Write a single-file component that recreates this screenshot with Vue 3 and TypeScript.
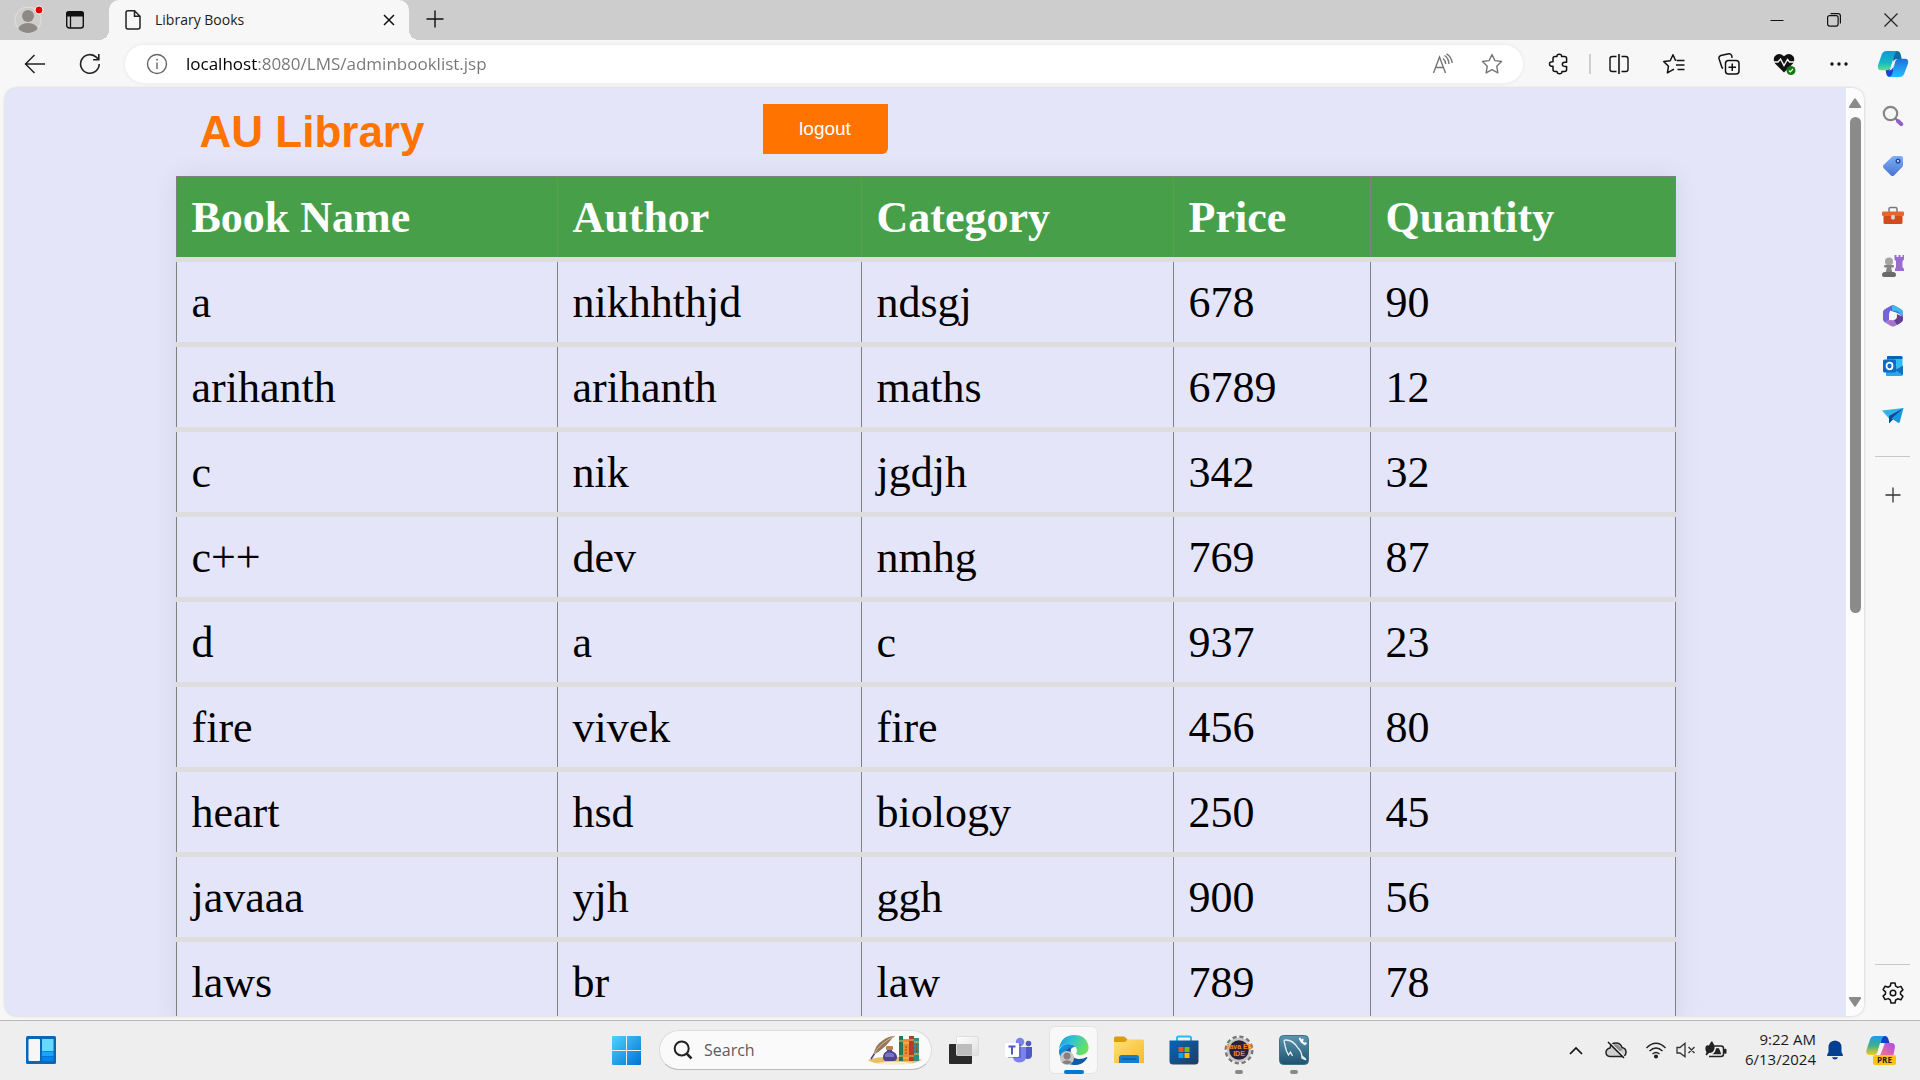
<script setup lang="ts">
import { ref } from 'vue'

interface Book {
  name: string
  author: string
  category: string
  price: number
  quantity: number
}

const books: Book[] = [
  { name: 'a', author: 'nikhhthjd', category: 'ndsgj', price: 678, quantity: 90 },
  { name: 'arihanth', author: 'arihanth', category: 'maths', price: 6789, quantity: 12 },
  { name: 'c', author: 'nik', category: 'jgdjh', price: 342, quantity: 32 },
  { name: 'c++', author: 'dev', category: 'nmhg', price: 769, quantity: 87 },
  { name: 'd', author: 'a', category: 'c', price: 937, quantity: 23 },
  { name: 'fire', author: 'vivek', category: 'fire', price: 456, quantity: 80 },
  { name: 'heart', author: 'hsd', category: 'biology', price: 250, quantity: 45 },
  { name: 'javaaa', author: 'yjh', category: 'ggh', price: 900, quantity: 56 },
  { name: 'laws', author: 'br', category: 'law', price: 789, quantity: 78 },
]

const address = ref('localhost:8080/LMS/adminbooklist.jsp')
const query = ref('')
</script>

<template>
  <div class="screen">
    <header class="tabstrip">
      <button class="avatar" aria-label="Profile">
        <svg width="32" height="32" viewBox="0 0 32 32">
          <defs><clipPath id="head"><circle cx="16" cy="17" r="13" /></clipPath></defs>
          <circle cx="16" cy="17" r="13" fill="#cfcdca" stroke="#e2e0dc" />
          <g clip-path="url(#head)" fill="#8d8985">
            <circle cx="16" cy="13" r="6" />
            <ellipse cx="16" cy="27" rx="10" ry="7" />
          </g>
          <circle cx="27" cy="7" r="4" fill="#e60000" stroke="#f4f4f4" />
        </svg>
      </button>
      <button class="workspaces" aria-label="Tab actions">
        <svg width="20" height="20" viewBox="0 0 20 20">
          <rect x="1.7" y="2" width="16.6" height="16" rx="2.5" fill="none" stroke="#111" stroke-width="1.4" />
          <path d="M1 6.5V4q0-3 3-3h12q3 0 3 3v2.500z" fill="#111" />
          <path d="M5.500 6v12" stroke="#111" stroke-width="1.300" />
        </svg>
      </button>
      <div class="tab">
        <svg class="page-icon" width="18" height="22" viewBox="0 0 18 22" fill="none" stroke="#222" stroke-width="1.500">
          <path d="M4 1.700h6.500L16 7.200V18q0 2-2 2H4q-2 0-2-2V3.700q0-2 2-2z M10.500 2v5.300h5.300" />
        </svg>
        <span class="tab-title">Library Books</span>
        <button class="tab-close" aria-label="Close tab">
          <svg width="12" height="12" viewBox="0 0 12 12" stroke="#111" stroke-width="1.500"><path d="M1 1l10 10M11 1L1 11" /></svg>
        </button>
      </div>
      <button class="new-tab" aria-label="New tab">
        <svg width="18" height="18" viewBox="0 0 18 18" stroke="#111" stroke-width="1.400"><path d="M9 .5v17M.5 9h17" /></svg>
      </button>
      <div class="window-buttons">
        <button aria-label="Minimize"><svg width="14" height="14" viewBox="0 0 14 14"><path d="M.5 7.500h13" stroke="#111" /></svg></button>
        <button aria-label="Restore">
          <svg width="14" height="14" viewBox="0 0 14 14" fill="none" stroke="#111" stroke-width="1.200">
            <rect x=".6" y="2.600" width="10.500" height="10.500" rx="2" /><path d="M3.500.6h7.500q2.400 0 2.400 2.400v7.500" />
          </svg>
        </button>
        <button aria-label="Close"><svg width="14" height="14" viewBox="0 0 14 14" stroke="#222" stroke-width="1.200"><path d="M.5.5l13 13M13.500.5l-13 13" /></svg></button>
      </div>
    </header>

    <nav class="toolbar">
      <button class="nav-button" aria-label="Back">
        <svg width="22" height="20" viewBox="0 0 22 20" fill="none" stroke="#222" stroke-width="1.500"><path d="M21 10H1.500M10.500 1L1.500 10l9 9" /></svg>
      </button>
      <button class="nav-button" aria-label="Refresh">
        <svg width="22" height="22" viewBox="0 0 22 22" fill="none" stroke="#222" stroke-width="1.600"><path d="M20.200 11A9.300 9.300 0 1 1 17.500 4.400L19.600 6.500M19.800 1v5.700h-5.700" /></svg>
      </button>
      <div class="address">
        <button class="site-info" aria-label="Site information">
          <svg width="22" height="22" viewBox="0 0 22 22" fill="none" stroke="#666" stroke-width="1.400"><circle cx="11" cy="11" r="9.500" /><path d="M11 9.500V16" /><circle cx="11" cy="6.700" r=".6" fill="#666" stroke-width=".8" /></svg>
        </button>
        <input v-model="address" class="url" type="text" aria-label="Address" spellcheck="false" />
        <button class="address-button" aria-label="Read aloud">
          <svg width="22" height="22" viewBox="0 0 22 22" fill="none" stroke="#767676" stroke-width="1.400"><path d="M1.500 20L7.500 4l6 16M4 14.500h7.500M11 5.500q2.500 2 2.700 5.500M12.500 2.500q4 2.500 4.500 8.500M14.500.8q5 3 5.700 9.200" /></svg>
        </button>
        <button class="address-button" aria-label="Add to favorites">
          <svg width="22" height="22" viewBox="0 0 22 22" fill="none" stroke="#767676" stroke-width="1.400" stroke-linejoin="round"><path d="M11 1.500l2.900 6.100 6.700.9-4.900 4.700 1.200 6.700-5.900-3.200-5.900 3.200 1.200-6.700L1.400 8.500l6.700-.9z" /></svg>
        </button>
      </div>
      <button class="tool extensions" aria-label="Extensions">
        <svg width="22" height="22" viewBox="0 0 22 22" fill="none" stroke="#111" stroke-width="1.500" stroke-linejoin="round"><path d="M5 5.500q0-2 2-2h2q-.2-2.300 2.300-2.300t2.300 2.300h3q2 0 2 2v3.700q-4.300-.4-4.300 2.100t4.300 2.100v3.100q0 2-2 2h-2.700q.2 2.300-2.300 2.300T9 18.500H7q-2 0-2-2v-3.200q-3.500.2-3.500-2.300T5 8.700z" /></svg>
      </button>
      <span class="tool-divider"></span>
      <button class="tool" aria-label="Split screen">
        <svg width="20" height="22" viewBox="0 0 20 22" fill="none" stroke="#111" stroke-width="1.400"><path d="M10 1v20" stroke-width="1.600" /><path d="M7.500 3.500H3.200Q1 3.500 1 5.700v10.600q0 2.200 2.200 2.200h4.300M12.500 3.500h4.300Q19 3.500 19 5.700v10.600q0 2.200-2.200 2.200h-4.300" /></svg>
      </button>
      <button class="tool" aria-label="Favorites">
        <svg width="22" height="22" viewBox="0 0 22 22" fill="none" stroke="#111" stroke-width="1.500" stroke-linejoin="round"><path d="M13.500 7.200l-1.100 0L10 1.700 7.200 7.700l-6.400.9 4.700 4.600-1.100 6.600L10 16.700l1-.4M14 7.500h7.500M13 12h8.500M14.500 16.500h7" /></svg>
      </button>
      <button class="tool" aria-label="Collections">
        <svg width="22" height="22" viewBox="0 0 22 22" fill="none" stroke="#111" stroke-width="1.500"><rect x="7.500" y="7.500" width="13.500" height="13.500" rx="3" /><path d="M14.250 10.500v7.500M10.500 14.250h7.500M5 15.500q-1-.5-1.400-2L1 5.500Q.5 3.300 2.800 2.500l8-1.700q2.300-.3 2.900 2l.4 2" /></svg>
      </button>
      <button class="tool" aria-label="Browser essentials">
        <svg width="24" height="24" viewBox="0 0 24 24">
          <path d="M12 20.500L3 11.500Q.5 7 3 4q4-4 9 .3 5-4.300 9-.3 2.500 3 0 7.500z" fill="#111" />
          <path d="M1 10h5l2.500-3 3.500 6.500 3.500-6 2 2.500H23" fill="none" stroke="#f7f7f7" stroke-width="1.400" />
          <circle cx="19" cy="18.500" r="4.500" fill="#107c10" /><path d="M17 18.700l1.300 1.300 2.700-3" fill="none" stroke="#fff" stroke-width="1.200" />
        </svg>
      </button>
      <button class="tool" aria-label="Settings and more">
        <svg width="20" height="6" viewBox="0 0 20 6" fill="#111"><circle cx="3" cy="3" r="1.700" /><circle cx="10" cy="3" r="1.700" /><circle cx="17" cy="3" r="1.700" /></svg>
      </button>
      <button class="copilot" aria-label="Copilot">
        <svg width="32" height="28" viewBox="0 0 32 28">
          <defs>
            <linearGradient id="cpA" x1="0" y1="0" x2="0" y2="1"><stop offset="0" stop-color="#1098dc" /><stop offset=".6" stop-color="#15b7c4" /><stop offset="1" stop-color="#63e08c" /></linearGradient>
            <linearGradient id="cpB" x1="0" y1="0" x2="0" y2="1"><stop offset="0" stop-color="#1f6fe0" /><stop offset="1" stop-color="#22bdfb" /></linearGradient>
          </defs>
          <path d="M15 1h5q3 0 3.800 4l.9 4h-4q-3 0-4 4z" fill="#0b6e9c" />
          <path d="M18 27h-5q-3 0-3.800-3.500L8.500 19h3.500q3 0 4-4z" fill="#1546d6" />
          <path d="M9.500 1H21q-2.500.5-3.500 4L14 16q-1 4.300-4.500 4.300H4q-4 0-3-5L4.500 5q1.300-4 5-4z" fill="url(#cpA)" />
          <path d="M22.500 27H12q2.500-.5 3.500-4L18 12q1-3.300 4.500-3.300H28q4 0 3 5L27.500 23q-1.300 4-5 4z" fill="url(#cpB)" />
          <path d="M18.500 9.500q-2 .7-2.800 3.500l-1.700 5q-.7 2-2.500 2.300h1q2.500 0 3.500-3l1.500-5q.6-2 2-2.800z" fill="#f4fbff" />
        </svg>
      </button>
    </nav>

    <div class="workspace">
      <div class="viewport">
        <main class="page">
          <div class="content">
            <div class="banner">
              <h1>AU Library</h1>
              <button class="logout">logout</button>
            </div>
            <table class="books">
              <thead>
                <tr>
                  <th class="col-name" scope="col">Book Name</th>
                  <th class="col-author" scope="col">Author</th>
                  <th class="col-category" scope="col">Category</th>
                  <th class="col-price" scope="col">Price</th>
                  <th scope="col">Quantity</th>
                </tr>
              </thead>
              <tbody>
                <tr v-for="book in books" :key="book.name">
                  <td>{{ book.name }}</td>
                  <td>{{ book.author }}</td>
                  <td>{{ book.category }}</td>
                  <td>{{ book.price }}</td>
                  <td>{{ book.quantity }}</td>
                </tr>
              </tbody>
            </table>
          </div>
        </main>
        <div class="scrollbar">
          <svg width="14" height="11" viewBox="0 0 14 11" fill="#8b8b8b"><path d="M6 1q1-1.500 2 0l5 7.500q.6 1.500-1 1.500H2Q.4 10 1 8.500z" /></svg>
          <div class="track"><div class="thumb"></div></div>
          <svg width="14" height="11" viewBox="0 0 14 11" fill="#8b8b8b"><path d="M6 10q1 1.500 2 0l5-7.500Q13.600 1 12 1H2Q.4 1 1 2.500z" /></svg>
        </div>
      </div>

      <aside class="sidebar">
        <button aria-label="Search">
          <svg width="22" height="22" viewBox="0 0 22 22" fill="none"><circle cx="8.500" cy="8.500" r="6.700" stroke="#858585" stroke-width="2.200" /><path d="M13.500 13.500l2 2" stroke="#777" stroke-width="2" /><path d="M16 16l3.200 3.200" stroke="#9160c8" stroke-width="4" stroke-linecap="round" /></svg>
        </button>
        <button aria-label="Shopping">
          <svg width="22" height="22" viewBox="0 0 22 22"><defs><linearGradient id="tagG" x1="0" y1="0" x2="0" y2="1"><stop stop-color="#7eb1f4" /><stop offset="1" stop-color="#4a72d2" /></linearGradient></defs><path d="M12 1h7q2 0 2 2v7q0 1.300-1 2.200l-8 8.200q-1.500 1.300-3 0l-7.500-7.500q-1.300-1.500 0-3L9.800 2Q10.700 1 12 1z" fill="url(#tagG)" /><circle cx="16" cy="6" r="1.800" fill="#d3e2ff" stroke="#264ba2" stroke-width="1.500" /></svg>
        </button>
        <button aria-label="Tools">
          <svg width="22" height="20" viewBox="0 0 22 20"><path d="M7 6V3q0-1.500 1.500-1.500h5Q15 1.500 15 3v3" fill="none" stroke="#777" stroke-width="1.500" /><path d="M1.500 9h19v7.500q0 1.500-1.500 1.500H3q-1.500 0-1.500-1.500z" fill="#d34a1b" /><rect x="0" y="5.500" width="22" height="4.500" rx="1.200" fill="#e9652c" /><rect x="9.200" y="9" width="3.600" height="4.500" rx="1.200" fill="#d6d6d6" /></svg>
        </button>
        <button aria-label="Games">
          <svg width="24" height="24" viewBox="0 0 24 24"><path d="M13.500 1h2v2h2V1h2v2h2V1H23v4.500l-1.500 1.500v6l1.500 2v2H14v-2l1-2V7l-1.500-1.500z" fill="#9a6bd0" /><g fill="#858585"><circle cx="8" cy="7.500" r="4" fill="#a5a5a5" /><rect x="3" y="11" width="10" height="2.500" rx="1" /><path d="M6 13h4l1.500 6h-7z" /><path d="M1 21q0-3 3-3h8q3 0 3 3 0 2-2 2H3q-2 0-2-2z" fill="#6a6a6a" /></g></svg>
        </button>
        <button aria-label="Microsoft 365">
          <svg width="22" height="22" viewBox="0 0 22 22"><path d="M9 .8q2-1 4 0l6 3.400q2 1.200 2 3.500V12l-4.500-3.500L8 5.500 6 13l-3 3Q1 15 1 12.800V7.500q0-2 2-3.300z" fill="#3e6fdb" /><path d="M10 .5q1.500-.5 3 .3l6 3.400q2 1.200 2 3.500V12l-5-5.500-6-1z" fill="#42b8e8" /><path d="M1 7.500q0-2 2-3.300L10 .5 7 7v8l-4 2.500q-2-1-2-3.500z" fill="#7762d8" /><path d="M3 17.500l4-2.500 5 .2L21 9v5q0 2.500-2 3.500l-6 3.500q-2 1-4 0z" fill="#a873cc" /><path d="M15 9l6 3v2q0 2.500-2 3.500l-4 2.500-3-5z" fill="#604095" /><circle cx="11" cy="11" r="4" fill="#f7f7f7" /></svg>
        </button>
        <button aria-label="Outlook">
          <svg width="22" height="22" viewBox="0 0 22 22"><path d="M6 1h13q1.500 0 1.500 1.500V11L13 15l-8-4V2.500Q5 1 6 1z" fill="#32bdf2" /><path d="M5 1.500Q5 1 6 1h13q1.500 0 1.500 1.500V4H5z" fill="#0b65ad" /><path d="M4 11h9l8 9q-.5 1-2 1H5q-1 0-1-1z" fill="#28a8ea" /><path d="M13 15l8-4.500V20z" fill="#1270c0" /><rect x="1" y="4.500" width="13" height="13" rx="1.500" fill="#0a6cc9" /><ellipse cx="7.500" cy="11" rx="3" ry="3.300" fill="none" stroke="#fff" stroke-width="1.800" /></svg>
        </button>
        <button aria-label="Drop">
          <svg width="22" height="20" viewBox="0 0 22 20"><path d="M0 4.500L21.500 2 7 12.500z" fill="#31b2ec" /><path d="M21.500 2L7 10v7.500l3.500-3.500z" fill="#0b4a8c" /><path d="M21.500 2l-12 10.500L16.500 17q1 0 1.300-1z" fill="#1b96de" /></svg>
        </button>
        <span class="side-divider"></span>
        <button aria-label="Customize sidebar">
          <svg width="16" height="16" viewBox="0 0 16 16" stroke="#333" stroke-width="1.300"><path d="M8 .5v15M.5 8h15" /></svg>
        </button>
        <span class="side-divider bottom"></span>
        <button aria-label="Settings">
          <svg width="24" height="24" viewBox="0 0 24 24" fill="none" stroke="#111" stroke-width="1.500" stroke-linejoin="round"><circle cx="12" cy="12" r="2.800" /><path d="M10 2h4l.7 3.200 2 1.200 3.200-1 2 3.500-2.400 2.200v2l2.400 2.200-2 3.500-3.200-1-2 1.200L14 22h-4l-.7-3.200-2-1.200-3.200 1-2-3.500 2.400-2.200v-2L2.100 8.700l2-3.500 3.200 1 2-1.200z" /></svg>
        </button>
      </aside>
    </div>

    <footer class="taskbar">
      <div class="task-left">
        <button aria-label="Widgets">
          <svg width="30" height="28" viewBox="0 0 30 28"><rect width="30" height="28" rx="1.500" fill="#0c66b5" /><rect x="2.500" y="3" width="11.500" height="22" rx="1" fill="#f6f6f6" /><rect x="16" y="3" width="11.500" height="12" fill="#66d9ff" /><rect x="16" y="15.500" width="11.500" height="4.500" fill="#1aa5ff" /><rect x="16" y="20.500" width="11.500" height="4.500" fill="#0084ee" /></svg>
        </button>
      </div>

      <div class="task-center">
        <button class="task" aria-label="Start">
          <svg width="29" height="29" viewBox="0 0 29 29"><defs><linearGradient id="winG" gradientUnits="userSpaceOnUse" x1="0" y1="0" x2="29" y2="29"><stop stop-color="#4fd2ff" /><stop offset="1" stop-color="#0071d2" /></linearGradient></defs><path d="M1 0h13v14H0V1q0-1 1-1zM15 0h13q1 0 1 1v13H15zM0 15h14v14H1q-1 0-1-1zM15 15h14v13q0 1-1 1H15z" fill="url(#winG)" /></svg>
        </button>
        <label class="search">
          <svg width="20" height="20" viewBox="0 0 20 20" fill="none" stroke="#222"><circle cx="8.700" cy="8.500" r="7" stroke-width="2" /><path d="M13.700 13.700l4.800 4.800" stroke-width="2.500" /></svg>
          <input v-model="query" type="text" placeholder="Search" aria-label="Search" />
          <svg width="58" height="32" viewBox="0 0 58 32">
            <path d="M2 26q12-4 28-3 16-1 26 3-6 3-14 4H16Q6 29 2 26z" fill="#e6bf62" />
            <path d="M9 29q20-3 40 0-20 4-40 0z" fill="#fbefc8" />
            <path d="M5 25L12 14" stroke="#4b3a85" stroke-width="1.500" /><path d="M8 20Q9 11 16 7q6-5 13-5-3 2-5 5-4 5-8 8-4 4-8 5z" fill="#94775b" /><path d="M8 20Q14 9 29 2" stroke="#d6b994" fill="none" />
            <path d="M21 12h5v5q5 2 5 6 0 4-3 4h-8q-3 0-3-4 0-4 4-6z" fill="#4d4791" /><rect x="20" y="12" width="7" height="4" rx="1" fill="#b98642" /><path d="M19 20q4-3 9 0v3h-9z" fill="#7a74bd" />
            <rect x="33" y="2" width="4" height="25" fill="#257957" /><rect x="37" y="5" width="6" height="22" fill="#ed8b32" /><rect x="43" y="2" width="5" height="25" fill="#b83a28" /><rect x="48" y="4" width="5" height="23" fill="#368c85" />
            <path d="M33 7h4M33 22h4M37 9h6M37 24h6M43 6h5M43 22h5M48 8h5M48 20h5" stroke="#f3c863" /><path d="M40 12v8M50.500 10v9" stroke="#8a4a22" stroke-dasharray="2 1" />
          </svg>
        </label>
        <button class="task" aria-label="Task view">
          <svg width="30" height="30" viewBox="0 0 30 30"><defs><linearGradient id="tvG" x1="0" y1="0" x2="1" y2="1"><stop stop-color="#fff" /><stop offset="1" stop-color="#dedede" /></linearGradient></defs><rect x="0" y="9" width="23" height="20" rx="1" fill="#2a2a2a" /><rect x="7.500" y="1.500" width="22" height="19" rx="1" fill="url(#tvG)" stroke="#ddd" /><rect x="8" y="9" width="15" height="11.500" fill="#bdbdbd" /></svg>
        </button>
        <button class="task" aria-label="Teams">
          <svg width="28" height="26" viewBox="0 0 28 26"><circle cx="15" cy="5" r="4.200" fill="#7b83eb" /><circle cx="23.500" cy="6.500" r="2.800" fill="#5059c9" /><path d="M18 10h9v8q0 4-4.500 4T18 19z" fill="#5059c9" /><path d="M8 10h13v9q0 6.500-6.500 6.500T8 19z" fill="#7b83eb" /><path d="M3 7h13v14H3z" fill="#4b53bc" opacity=".5" /><rect x="0" y="6" width="14" height="14" rx="1" fill="#fff" /><path d="M3.500 9.500h7M7 9.500v8" stroke="#5059c9" stroke-width="2" /></svg>
        </button>
        <button class="task active" aria-label="Microsoft Edge">
          <svg width="32" height="32" viewBox="0 0 32 32">
            <defs><linearGradient id="edA" x1="0" y1="0" x2="1" y2=".4"><stop stop-color="#1a91de" /><stop offset=".45" stop-color="#2cc3d6" /><stop offset="1" stop-color="#6be060" /></linearGradient><linearGradient id="edB" x1="0" y1="0" x2="1" y2="1"><stop stop-color="#1aa0e8" /><stop offset="1" stop-color="#0a4a9d" /></linearGradient></defs>
            <path d="M1 15Q3 1 16.500 1 27 1 30 10q2.500 9-6 11-5 .8-6-1.500 2-2.500 0-6-3-4-8-3.500Q4 10.500 1 15z" fill="url(#edA)" />
            <path d="M1 16Q4 10 10 10q5 0 7.500 3-4-.5-5 3.500 0 7 6 10.500 4 1.500 8 0-5 4.500-11 4Q3 30 1 19z" fill="url(#edB)" />
            <path d="M12.500 16.500Q12 24 20 25q5 .3 9-2 .7.200 0 1.500-4 6-10.500 6-9.500-1-11-9 0-6 5-8z" fill="#125ba8" />
            <circle cx="9" cy="24" r="7" fill="#c9c7c4" /><circle cx="9" cy="22" r="3.500" fill="#85817e" /><path d="M4 28.500q5-4.500 10 0-5 3.500-10 0z" fill="#85817e" />
          </svg>
        </button>
        <button class="task" aria-label="File Explorer">
          <svg width="30" height="28" viewBox="0 0 30 28"><defs><linearGradient id="foG" x1="0" y1="0" x2="1" y2="1"><stop stop-color="#ffe07a" /><stop offset="1" stop-color="#f7ba28" /></linearGradient></defs><path d="M0 2q0-1.500 1.500-1.500h8Q11 .5 12 2l1.500 1.500V9H0z" fill="#dc9a0d" /><path d="M0 6h10q1.500 0 2.500-1.500T15 3.500h13.500Q30 3.500 30 5v22H0z" fill="url(#foG)" /><path d="M5 27v-5.500Q5 19 7.500 19h15q2.500 0 2.500 2.500V27z" fill="#137fd2" /><path d="M8.500 23h13" stroke="#0c5ca8" stroke-width="1.500" stroke-linecap="round" /></svg>
        </button>
        <button class="task" aria-label="Microsoft Store">
          <svg width="30" height="30" viewBox="0 0 30 30"><defs><linearGradient id="stG" x1="0" y1="0" x2="1" y2="1"><stop stop-color="#0068bb" /><stop offset="1" stop-color="#28395e" /></linearGradient></defs><path d="M8 6V3q0-1.500 1.500-1.500h11Q22 1.500 22 3v3" fill="none" stroke="#27bdf1" stroke-width="2" /><path d="M.5 5.500h29V26q0 3.500-3.500 3.500H4Q.5 29.500.5 26z" fill="url(#stG)" /><rect x="9.500" y="12" width="5" height="5" fill="#f25022" /><rect x="15.500" y="12" width="5" height="5" fill="#7fba00" /><rect x="9.500" y="18" width="5" height="5" fill="#00a4ef" /><rect x="15.500" y="18" width="5" height="5" fill="#ffb900" /></svg>
        </button>
        <button class="task running" aria-label="Java EE IDE">
          <svg width="32" height="30" viewBox="0 0 32 30"><circle cx="16" cy="15" r="12.800" fill="none" stroke="#777" stroke-width="3.400" stroke-dasharray="4 2.700" /><circle cx="16" cy="15" r="11" fill="#2b2238" stroke="#c8c8c8" stroke-width="2.500" /><g fill="#f08a1d" font-family="Liberation Sans, sans-serif" font-weight="700" font-size="7" text-anchor="middle"><text x="16" y="14">Java EE</text><text x="16" y="21">IDE</text></g></svg>
        </button>
        <button class="task running" aria-label="MySQL Workbench">
          <svg width="30" height="30" viewBox="0 0 30 30"><defs><linearGradient id="myG" x1="0" y1="0" x2="0" y2="1"><stop stop-color="#5c95b0" /><stop offset="1" stop-color="#1e536e" /></linearGradient></defs><rect x=".5" y=".5" width="29" height="29" rx="4" fill="url(#myG)" stroke="#3c718b" /><path d="M27 25l-4-2q0-6-4-10Q14 5 7 5 4 5 5.500 8q1 5 2 8l2 4 2-3 2 4M27 25q-1-2-4-4" fill="none" stroke="#e6f0f5" stroke-width="1.300" /><path d="M20.500 3l2 3.500 3 2.500 2-1M23 6l1-2" stroke="#fff" stroke-width="2" fill="none" /></svg>
        </button>
      </div>

      <div class="tray">
        <button class="tray-chevron" aria-label="Show hidden icons"><svg width="14" height="9" viewBox="0 0 14 9" fill="none" stroke="#111" stroke-width="1.700"><path d="M1 8l6-6 6 6" /></svg></button>
        <button class="tray-cloud" aria-label="OneDrive">
          <svg width="22" height="18" viewBox="0 0 22 18"><path d="M5 15.500Q1 15 1 11.500T5 7q.7-5 6-5 4.500 0 6 4.500 4 .7 4 4.700t-4 4.300z" fill="#d0d0d0" stroke="#222" stroke-width="1.500" /><path d="M6 5q6-4 9 1l3 3-6 2z" fill="#8c8c8c" /><path d="M4.500 1l16 16" stroke="#ededed" stroke-width="1.500" /><path d="M3 1l16 16" stroke="#111" stroke-width="1.500" /></svg>
        </button>
        <button class="tray-status" aria-label="Network, volume and battery">
          <svg width="22" height="18" viewBox="0 0 22 18" fill="none" stroke="#222" stroke-width="1.500"><path d="M1.500 7q9.500-9.500 19 0" /><path d="M4.500 10q6.500-6 13 0M7.500 13q3.500-3 7 0" /><circle cx="11" cy="15.500" r="1.300" fill="#222" /></svg>
          <svg width="20" height="16" viewBox="0 0 20 16" fill="none" stroke="#333" stroke-width="1.300"><path d="M1 5.500h3L9 1.300v13.400L4 11H1zM12.500 5l6 6M18.500 5l-6 6" /></svg>
          <svg width="22" height="18" viewBox="0 0 22 18"><path d="M9 5h7q2.500 0 2.500 2.500v5.500q0 2.500-2.500 2.500H4" fill="none" stroke="#222" stroke-width="1.500" /><path d="M11 7.200h3L16.300 13.300H7q3.500-1.500 4-6.100z" fill="#222" /><rect x="19" y="7.700" width="2.500" height="5" rx="1" fill="#222" /><path d="M7 0q3 4.500 2.500 7.500-1 4.500-5.500 4.500L1.500 14.500.5 13.500l1-2Q-.5 7.500 1 5q1-1 3-.5Q4.800 2 7 0z" fill="#222" /></svg>
        </button>
        <button class="clock"><span>9:22 AM</span><span>6/13/2024</span></button>
        <button class="tray-bell" aria-label="Notifications"><svg width="18" height="20" viewBox="0 0 18 20" fill="#053f91"><path d="M9 .5q6.500.5 6.500 7V12l1.500 3q.3 1-1 1H2q-1.300 0-1-1l1.500-3V7.500Q2.500 1 9 .5zM6 17.200h6q-.8 2.300-3 2.300t-3-2.300z" /></svg></button>
        <button class="tray-copilot" aria-label="Copilot preview">
          <svg width="30" height="30" viewBox="0 0 30 30">
            <defs><linearGradient id="prA" x1="0" y1="0" x2="0" y2="1"><stop stop-color="#1f9af0" /><stop offset=".5" stop-color="#3db08b" /><stop offset="1" stop-color="#f8ca1c" /></linearGradient><linearGradient id="prB" x1="1" y1="0" x2="0" y2="1"><stop stop-color="#a84bf0" /><stop offset="1" stop-color="#ff7a76" /></linearGradient></defs>
            <path d="M13 1h6q2.500 0 3.500 3.500L23.500 8h-4q-3 0-4 3z" fill="#173fc5" /><path d="M8.500 1H19q-2.500.5-3.500 4L12 16q-1 4-4.500 4H3.500Q-.5 19.500.5 15L4 4.500Q5 1 8.500 1z" fill="url(#prA)" /><path d="M19 8h6.500q4 0 3.300 5L27 22H13.500z" fill="url(#prB)" /><path d="M18 8l-4.500 13h-3L14 8z" fill="#f7f3fb" />
            <rect x="7" y="20" width="23" height="10" rx="2" fill="#ffc20e" /><text x="18.500" y="28" text-anchor="middle" font-family="Open Sans, sans-serif" font-weight="700" font-size="8" fill="#222">PRE</text>
          </svg>
        </button>
      </div>
    </footer>
  </div>
</template>

<style>
html,
body {
  margin: 0;
}
</style>

<style scoped>
.screen {
  display: flex;
  flex-direction: column;
  height: 100vh;
  overflow: hidden;
  background: #f7f7f7;
  color: #1b1b1b;
  font-family: "Open Sans", "Noto Sans", sans-serif;
}

.screen *,
.screen *::before {
  box-sizing: border-box;
}

button {
  display: flex;
  flex: none;
  align-items: center;
  justify-content: center;
  padding: 0;
  border: 0;
  background: none;
  color: inherit;
  font: inherit;
}

input {
  min-width: 0;
  padding: 0;
  border: 0;
  outline: 0;
  background: none;
  font: inherit;
}

svg {
  display: block;
  flex: none;
}

/* Tab strip */
.tabstrip {
  display: flex;
  flex: none;
  height: 40px;
  background: #cdcdcd;
}

.avatar {
  width: 32px;
  margin-left: 12px;
  padding-bottom: 2px;
}

.workspaces {
  width: 20px;
  margin-left: 21px;
}

.tab {
  position: relative;
  display: flex;
  align-items: center;
  width: 300px;
  margin-left: 24px;
  padding: 0 14px 0 15px;
  border-radius: 10px 10px 0 0;
  background: #f7f7f7;
}

.tab::before,
.tab::after {
  position: absolute;
  bottom: 0;
  width: 10px;
  height: 10px;
  content: "";
}

.tab::before {
  right: 100%;
  background: radial-gradient(circle at 0 0, #cdcdcd 10px, #f7f7f7 10px);
}

.tab::after {
  left: 100%;
  background: radial-gradient(circle at 100% 0, #cdcdcd 10px, #f7f7f7 10px);
}

.tab-title {
  flex: 1;
  margin-left: 13px;
  font-size: 14px;
  line-height: 20px;
}

.new-tab {
  width: 40px;
  margin-left: 6px;
  padding-bottom: 2px;
}

.window-buttons {
  display: flex;
  margin-left: auto;
  padding-right: 1px;
}

.window-buttons button {
  width: 57px;
  padding-bottom: 1px;
}

/* Toolbar */
.toolbar {
  display: flex;
  flex: none;
  align-items: center;
  height: 48px;
  padding-left: 7px;
}

.nav-button {
  width: 55px;
  height: 40px;
}

.address {
  display: flex;
  flex: 1;
  align-items: center;
  height: 38px;
  margin-left: 8px;
  padding: 0 7px 0 21px;
  border-radius: 19px;
  background: #fff;
  box-shadow: 0 0 4px rgba(0, 0, 0, 0.08);
}

.url {
  flex: 1;
  height: 24px;
  margin-left: 18px;
  background: linear-gradient(to right, #000 71px, #767676 71px);
  background-clip: text;
  color: transparent;
  font-size: 17px;
  line-height: 24px;
}

.address-button {
  width: 49px;
  height: 38px;
}

.tool {
  width: 55px;
  height: 40px;
}

.extensions {
  width: 66px;
  padding-left: 6px;
}

.tool-divider {
  width: 2px;
  height: 20px;
  background: #cfcfcf;
}

.copilot {
  width: 54px;
  height: 40px;
}

/* Browser body */
.workspace {
  display: flex;
  flex: 1;
  min-height: 0;
}

.viewport {
  display: flex;
  flex: 1;
  min-width: 0;
  margin: 0 0 4px 5px;
  overflow: hidden;
  border-radius: 12px;
  background: #e5e5fa;
  box-shadow: 0 0 3px rgba(0, 0, 0, 0.2);
}

.page {
  flex: 1;
  min-width: 0;
  overflow: hidden;
}

.content {
  width: 100%;
  max-width: 1500px;
  margin: 0 auto;
}

.banner {
  display: flex;
  height: 88px;
  padding: 16px 24px;
}

.banner h1 {
  width: 563px;
  margin: 0;
  color: #ff7400;
  font-family: "Liberation Sans", Arial, sans-serif;
  font-size: 44px;
  font-weight: 700;
  line-height: 56px;
}

.logout {
  width: 125px;
  height: 50px;
  border-radius: 0 0 6px 0;
  background: #ff7400;
  color: #fff;
  font-family: "Liberation Sans", Arial, sans-serif;
  font-size: 19px;
}

.books {
  width: 100%;
  border-collapse: collapse;
  box-shadow: 0 0 25px rgba(0, 0, 0, 0.08);
  color: #000;
  font-family: "Liberation Serif", "Times New Roman", serif;
  font-size: 44px;
  line-height: 50px;
  table-layout: fixed;
}

.books th,
.books td {
  padding: 16px 15px 14px;
  border: 1px solid #808080;
  border-bottom: 5px solid #ddd;
  text-align: left;
}

.books th {
  background: #47a049;
  color: #fff;
}

.col-name {
  width: 381px;
}

.col-author {
  width: 304px;
}

.col-category {
  width: 312px;
}

.col-price {
  width: 197px;
}

.scrollbar {
  display: flex;
  flex: none;
  flex-direction: column;
  align-items: center;
  width: 18px;
  padding: 10px 0 9px;
  background: #fcfcfc;
}

.track {
  flex: 1;
  width: 11px;
  margin: 8px 0 9px;
}

.thumb {
  height: 57%;
  border-radius: 6px;
  background: #8b8b8b;
}

/* Browser sidebar */
.sidebar {
  display: flex;
  flex: none;
  flex-direction: column;
  align-items: center;
  width: 56px;
  padding: 3px 0 2px 1px;
}

.sidebar button {
  width: 50px;
  height: 50px;
}

.side-divider {
  width: 35px;
  height: 1px;
  margin: 15px 0 13px;
  background: #c8c8c8;
}

.side-divider.bottom {
  margin: auto 0 3px;
}

/* Taskbar */
.taskbar {
  display: grid;
  flex: none;
  grid-template-columns: 1fr auto 1fr;
  align-items: center;
  height: 60px;
  padding-bottom: 1px;
  border-top: 1px solid #b8b8b8;
  background: #eee;
}

.task-left {
  padding-left: 26px;
}

.task-center {
  display: flex;
  align-items: center;
}

.task {
  position: relative;
  width: 55px;
  height: 48px;
}

.task.active::before {
  position: absolute;
  inset: 0 3px;
  border: 1px solid #e4e4e4;
  border-radius: 6px;
  background: #f8f8f8;
  content: "";
}

.task svg {
  position: relative;
}

.active::after,
.running::after {
  position: absolute;
  bottom: 0;
  width: 20px;
  height: 4px;
  border-radius: 2px;
  background: #0078d4;
  content: "";
}

.running::after {
  width: 8px;
  background: #888;
}

.search {
  display: flex;
  align-items: center;
  width: 273px;
  height: 40px;
  margin: 0 4px 0 5px;
  padding: 0 7px 0 13px;
  border: 1px solid #dcdcdc;
  border-bottom-color: #bbb;
  border-radius: 20px;
  background: #fafafa;
}

.search input {
  flex: 1;
  margin-left: 11px;
  font-size: 16px;
  line-height: 24px;
}

.search input::placeholder {
  color: #5c5c5c;
  opacity: 1;
}

.tray {
  display: flex;
  align-items: center;
  justify-content: flex-end;
  padding-right: 24px;
}

.tray-chevron {
  width: 40px;
  height: 40px;
}

.tray-cloud {
  width: 40px;
  height: 40px;
}

.tray-status {
  gap: 9px;
  height: 40px;
  margin-left: 9px;
}

.clock {
  flex-direction: column;
  align-items: flex-end;
  margin-left: 18px;
  padding-bottom: 2px;
  font-size: 15px;
  line-height: 20px;
}

.tray-bell {
  width: 38px;
  height: 40px;
}

.tray-copilot {
  width: 30px;
  margin-left: 12px;
}
</style>
